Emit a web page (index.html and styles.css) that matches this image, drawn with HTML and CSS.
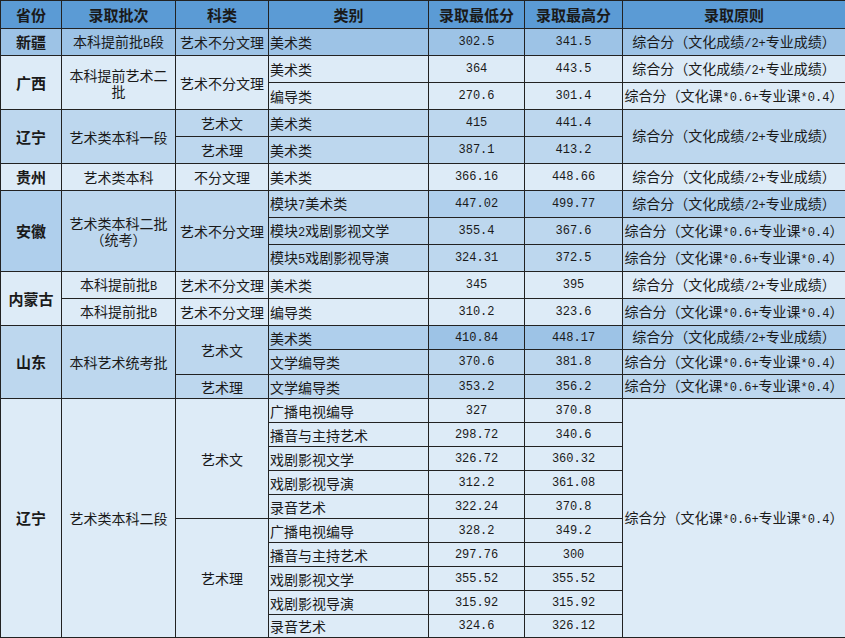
FILE: index.html
```html
<!DOCTYPE html>
<html lang="zh-CN">
<head>
<meta charset="utf-8">
<title>艺术类录取分数</title>
<link rel="stylesheet" href="styles.css">
</head>
<body>
<table class="grid">
  <colgroup>
    <col class="c-prov"><col class="c-batch"><col class="c-type"><col class="c-cat"><col class="c-min"><col class="c-max"><col class="c-rule">
  </colgroup>
  <thead>
    <tr class="r-head">
      <th>省份</th><th>录取批次</th><th>科类</th><th>类别</th><th>录取最低分</th><th>录取最高分</th><th>录取原则</th>
    </tr>
  </thead>
  <tbody>
    <tr class="r27">
      <td class="prov d">新疆</td><td class="d">本科提前批<span class="hw">B</span>段</td><td class="d">艺术不分文理</td><td class="cat d">美术类</td><td class="num d">302.5</td><td class="num d">341.5</td><td class="rule d">综合分（文化成绩<span class="hw">/2+</span>专业成绩）</td>
    </tr>
    <tr class="r27">
      <td class="prov l" rowspan="2">广西</td><td class="batch l" rowspan="2">本科提前艺术二批</td><td class="l" rowspan="2">艺术不分文理</td><td class="cat l">美术类</td><td class="num l">364</td><td class="num l">443.5</td><td class="rule l">综合分（文化成绩<span class="hw">/2+</span>专业成绩）</td>
    </tr>
    <tr class="r27">
      <td class="cat l">编导类</td><td class="num l">270.6</td><td class="num l">301.4</td><td class="rule l">综合分（文化课<span class="hw">*0.6+</span>专业课<span class="hw">*0.4</span>）</td>
    </tr>
    <tr class="r27">
      <td class="prov m" rowspan="2">辽宁</td><td class="batch m" rowspan="2">艺术类本科一段</td><td class="m">艺术文</td><td class="cat m">美术类</td><td class="num m">415</td><td class="num m">441.4</td><td class="rule m" rowspan="2">综合分（文化成绩<span class="hw">/2+</span>专业成绩）</td>
    </tr>
    <tr class="r27">
      <td class="m">艺术理</td><td class="cat m">美术类</td><td class="num m">387.1</td><td class="num m">413.2</td>
    </tr>
    <tr class="r27">
      <td class="prov l">贵州</td><td class="l">艺术类本科</td><td class="l">不分文理</td><td class="cat l">美术类</td><td class="num l">366.16</td><td class="num l">448.66</td><td class="rule l">综合分（文化成绩<span class="hw">/2+</span>专业成绩）</td>
    </tr>
    <tr class="r27">
      <td class="prov md" rowspan="3">安徽</td><td class="batch m" rowspan="3">艺术类本科二批（统考）</td><td class="m" rowspan="3">艺术不分文理</td><td class="cat m">模块<span class="hw">7</span>美术类</td><td class="num md">447.02</td><td class="num md">499.77</td><td class="rule md">综合分（文化成绩<span class="hw">/2+</span>专业成绩）</td>
    </tr>
    <tr class="r27">
      <td class="cat m">模块<span class="hw">2</span>戏剧影视文学</td><td class="num m">355.4</td><td class="num m">367.6</td><td class="rule m">综合分（文化课<span class="hw">*0.6+</span>专业课<span class="hw">*0.4</span>）</td>
    </tr>
    <tr class="r27">
      <td class="cat m">模块<span class="hw">5</span>戏剧影视导演</td><td class="num m">324.31</td><td class="num m">372.5</td><td class="rule m">综合分（文化课<span class="hw">*0.6+</span>专业课<span class="hw">*0.4</span>）</td>
    </tr>
    <tr class="r27">
      <td class="prov l" rowspan="2">内蒙古</td><td class="l">本科提前批<span class="hw">B</span></td><td class="l">艺术不分文理</td><td class="cat l">美术类</td><td class="num l">345</td><td class="num l">395</td><td class="rule l">综合分（文化成绩<span class="hw">/2+</span>专业成绩）</td>
    </tr>
    <tr class="r27">
      <td class="l">本科提前批<span class="hw">B</span></td><td class="l">艺术不分文理</td><td class="cat l">编导类</td><td class="num l">310.2</td><td class="num l">323.6</td><td class="rule m">综合分（文化课<span class="hw">*0.6+</span>专业课<span class="hw">*0.4</span>）</td>
    </tr>
    <tr class="r24">
      <td class="prov m" rowspan="3">山东</td><td class="batch m" rowspan="3">本科艺术统考批</td><td class="m" rowspan="2">艺术文</td><td class="cat md">美术类</td><td class="num d">410.84</td><td class="num d">448.17</td><td class="rule md">综合分（文化成绩<span class="hw">/2+</span>专业成绩）</td>
    </tr>
    <tr class="r25">
      <td class="cat m">文学编导类</td><td class="num m">370.6</td><td class="num m">381.8</td><td class="rule m">综合分（文化课<span class="hw">*0.6+</span>专业课<span class="hw">*0.4</span>）</td>
    </tr>
    <tr class="r24">
      <td class="m">艺术理</td><td class="cat m">文学编导类</td><td class="num m">353.2</td><td class="num m">356.2</td><td class="rule m">综合分（文化课<span class="hw">*0.6+</span>专业课<span class="hw">*0.4</span>）</td>
    </tr>
    <tr class="r24">
      <td class="prov l" rowspan="10">辽宁</td><td class="batch l" rowspan="10">艺术类本科二段</td><td class="l" rowspan="5">艺术文</td><td class="cat l">广播电视编导</td><td class="num l">327</td><td class="num l">370.8</td><td class="rule l" rowspan="10">综合分（文化课<span class="hw">*0.6+</span>专业课<span class="hw">*0.4</span>）</td>
    </tr>
    <tr class="r24"><td class="cat l">播音与主持艺术</td><td class="num l">298.72</td><td class="num l">340.6</td></tr>
    <tr class="r24"><td class="cat l">戏剧影视文学</td><td class="num l">326.72</td><td class="num l">360.32</td></tr>
    <tr class="r24"><td class="cat l">戏剧影视导演</td><td class="num l">312.2</td><td class="num l">361.08</td></tr>
    <tr class="r24"><td class="cat l">录音艺术</td><td class="num l">322.24</td><td class="num l">370.8</td></tr>
    <tr class="r24">
      <td class="l" rowspan="5">艺术理</td><td class="cat l">广播电视编导</td><td class="num l">328.2</td><td class="num l">349.2</td>
    </tr>
    <tr class="r24"><td class="cat l">播音与主持艺术</td><td class="num l">297.76</td><td class="num l">300</td></tr>
    <tr class="r24"><td class="cat l">戏剧影视文学</td><td class="num l">355.52</td><td class="num l">355.52</td></tr>
    <tr class="r24"><td class="cat l">戏剧影视导演</td><td class="num l">315.92</td><td class="num l">315.92</td></tr>
    <tr class="r23"><td class="cat l">录音艺术</td><td class="num l">324.6</td><td class="num l">326.12</td></tr>
  </tbody>
</table>
</body>
</html>
```

FILE: styles.css
```css
html, body {
  margin: 0;
  padding: 0;
  background: #ffffff;
}

.grid {
  border-collapse: collapse;
  table-layout: fixed;
  width: 845px;
  font-family: "Noto Sans CJK SC", "Noto Sans", sans-serif;
  font-size: 14px;
  color: #1a1a1a;
}

.c-prov { width: 61px; }
.c-batch { width: 114px; }
.c-type { width: 93px; }
.c-cat { width: 160px; }
.c-min { width: 96px; }
.c-max { width: 98px; }
.c-rule { width: 223px; }

.grid th,
.grid td {
  border: 1px solid #222222;
  padding: 0;
  text-align: center;
  vertical-align: middle;
  line-height: 16px;
  white-space: nowrap;
  overflow: hidden;
}

.grid th {
  background: #5b9bd5;
  font-weight: 700;
  font-size: 15px;
}

.r-head { height: 28px; }
.r27 { height: 27px; }
.r25 { height: 25px; }
.r24 { height: 24px; }
.r23 { height: 23px; }

.grid td.prov {
  font-weight: 700;
  font-size: 15px;
}

.grid td.batch {
  white-space: normal;
  padding: 0 3px;
}

.grid td.cat {
  text-align: left;
  padding-left: 1px;
}

.grid td.num {
  font-family: "Liberation Mono", "DejaVu Sans Mono", monospace;
  font-size: 12px;
}

.hw {
  font-family: "Liberation Mono", "DejaVu Sans Mono", monospace;
  font-size: 12px;
}

.rule .hw {
  letter-spacing: 0;
}

.d { background: #9dc3e6; }
.md { background: #afcfec; }
.m { background: #bdd7ee; }
.l { background: #ddebf7; }
```
